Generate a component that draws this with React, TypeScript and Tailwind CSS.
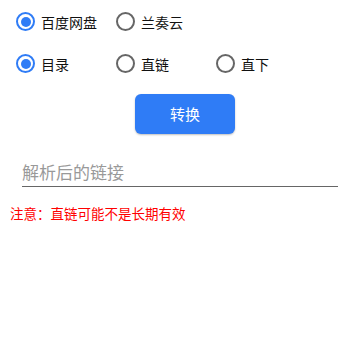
import { useState } from "react";

const FONT = { fontFamily: '"Noto Sans CJK SC", "Noto Sans", sans-serif' };

function Radio({
  label,
  checked,
  onClick,
  width,
}: {
  label: string;
  checked: boolean;
  onClick: () => void;
  width: string;
}) {
  return (
    <button onClick={onClick} className={`flex items-center gap-[6px] ${width}`}>
      <span
        className={`w-[19px] h-[19px] rounded-full border-2 flex items-center justify-center shrink-0 ${
          checked ? "border-[#2f7cf6]" : "border-[#666]"
        }`}
      >
        {checked && <span className="w-[10px] h-[10px] rounded-full bg-[#2f7cf6]" />}
      </span>
      <span className="text-[14px] leading-none text-[#111]">{label}</span>
    </button>
  );
}

export default function App() {
  const [source, setSource] = useState(0);
  const [mode, setMode] = useState(0);

  return (
    <div className="w-[360px] h-[360px] bg-white" style={FONT}>
      <div className="flex pl-[16px] pt-[11px] h-[21px] items-center box-content">
        <Radio label="百度网盘" checked={source === 0} onClick={() => setSource(0)} width="w-[100px]" />
        <Radio label="兰奏云" checked={source === 1} onClick={() => setSource(1)} width="w-[100px]" />
      </div>
      <div className="flex pl-[16px] pt-[21px] h-[21px] items-center box-content">
        <Radio label="目录" checked={mode === 0} onClick={() => setMode(0)} width="w-[100px]" />
        <Radio label="直链" checked={mode === 1} onClick={() => setMode(1)} width="w-[100px]" />
        <Radio label="直下" checked={mode === 2} onClick={() => setMode(2)} width="w-[100px]" />
      </div>
      <div className="flex justify-center pt-[20px] pl-[10px]">
        <button className="w-[100px] h-[40px] rounded-[6px] bg-[#2f7cf6] text-white text-[15px] shadow-[0_1px_2px_rgba(0,0,0,0.25)]">
          转换
        </button>
      </div>
      <div className="px-[22px] pt-[26px]">
        <input
          placeholder="解析后的链接"
          className="w-full h-[26px] border-b-[1.5px] border-[#666] text-[17px] leading-none outline-none placeholder:text-[#999] pb-[3px]"
        />
      </div>
      <div className="pl-[10px] pt-[20px] text-[13.5px] leading-none text-[#ff0000]">
        注意：直链可能不是长期有效
      </div>
    </div>
  );
}
